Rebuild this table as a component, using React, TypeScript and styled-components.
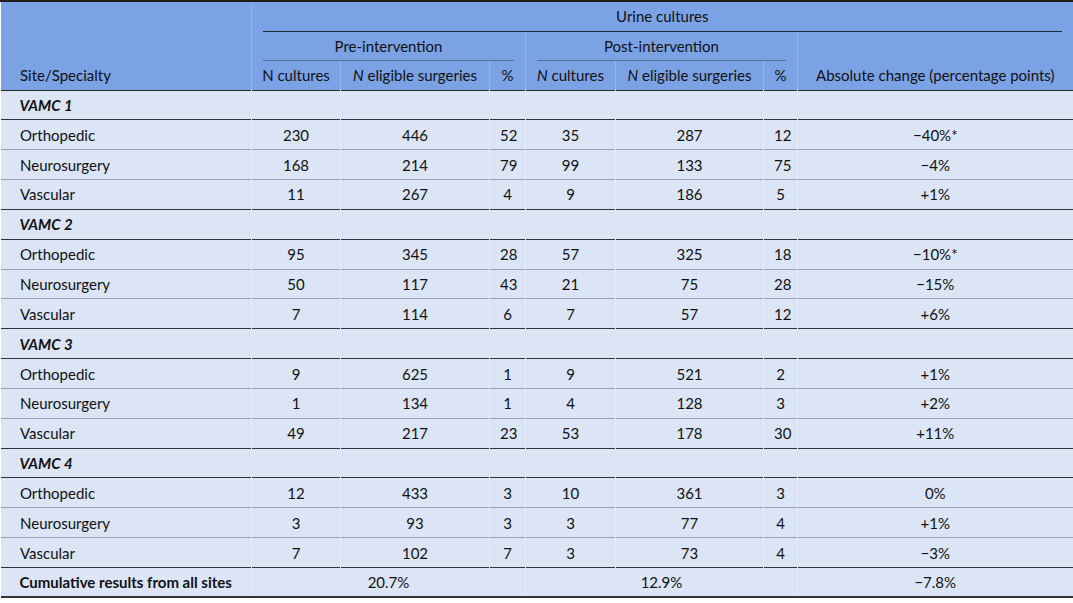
import React from 'react'
import styled, { createGlobalStyle } from 'styled-components'

const GlobalStyle = createGlobalStyle`
  body {
    margin: 0;
    background: #fff;
  }
`

interface Row {
  name: string
  values: string[]
  change: string
}

interface Group {
  site: string
  rows: Row[]
}

const groups: Group[] = [
  {
    site: 'VAMC 1',
    rows: [
      { name: 'Orthopedic', values: ['230', '446', '52', '35', '287', '12'], change: '−40%*' },
      { name: 'Neurosurgery', values: ['168', '214', '79', '99', '133', '75'], change: '−4%' },
      { name: 'Vascular', values: ['11', '267', '4', '9', '186', '5'], change: '+1%' }
    ]
  },
  {
    site: 'VAMC 2',
    rows: [
      { name: 'Orthopedic', values: ['95', '345', '28', '57', '325', '18'], change: '−10%*' },
      { name: 'Neurosurgery', values: ['50', '117', '43', '21', '75', '28'], change: '−15%' },
      { name: 'Vascular', values: ['7', '114', '6', '7', '57', '12'], change: '+6%' }
    ]
  },
  {
    site: 'VAMC 3',
    rows: [
      { name: 'Orthopedic', values: ['9', '625', '1', '9', '521', '2'], change: '+1%' },
      { name: 'Neurosurgery', values: ['1', '134', '1', '4', '128', '3'], change: '+2%' },
      { name: 'Vascular', values: ['49', '217', '23', '53', '178', '30'], change: '+11%' }
    ]
  },
  {
    site: 'VAMC 4',
    rows: [
      { name: 'Orthopedic', values: ['12', '433', '3', '10', '361', '3'], change: '0%' },
      { name: 'Neurosurgery', values: ['3', '93', '3', '3', '77', '4'], change: '+1%' },
      { name: 'Vascular', values: ['7', '102', '7', '3', '73', '4'], change: '−3%' }
    ]
  }
]

const Table = styled.table`
  width: 1072px;
  border-collapse: collapse;
  table-layout: fixed;
  font-family: Lato, 'Liberation Sans', sans-serif;
  font-size: 15px;
  color: #111;
  border-top: 2px solid #1c1c1c;
  border-bottom: 2px solid #333;
`

const HeadRow = styled.tr<{ $h?: number }>`
  background: #7ba2e5;
  height: ${(p) => p.$h || 30}px;
`

const HeadCell = styled.th<{ $align?: 'left' | 'center'; $first?: boolean }>`
  font-weight: 400;
  text-align: ${(p) => p.$align || 'center'};
  vertical-align: bottom;
  padding: 0 10px 6px ${(p) => (p.$first ? '19px' : '10px')};
  border-left: 1px solid rgba(255, 255, 255, 0.18);
  white-space: nowrap;
`

const SpanCell = styled.th`
  font-weight: 400;
  padding: 0 11px;
  vertical-align: bottom;
  border-left: 1px solid rgba(255, 255, 255, 0.18);
`

const SpanLabel = styled.div`
  height: 29px;
  line-height: 29px;
  border-bottom: 1px solid #1e2a3a;
  text-align: center;
`

const SubSpanLabel = styled(SpanLabel)`
  height: 28px;
  line-height: 28px;
  border-bottom-color: #5a6f94;
`

const HeaderEnd = styled(HeadRow)`
  border-bottom: 1px solid #2a2a2a;
`

const BodyRow = styled.tr<{ $strong?: boolean }>`
  background: #dbe5f6;
  height: 29.85px;
  border-bottom: 1px solid ${(p) => (p.$strong ? '#2f3338' : '#9ba2ad')};
`

const Cell = styled.td<{ $first?: boolean }>`
  text-align: ${(p) => (p.$first ? 'left' : 'center')};
  padding: 0 10px 0 ${(p) => (p.$first ? '19px' : '10px')};
  border-left: 1px solid rgba(255, 255, 255, 0.3);
  white-space: nowrap;
`

const SiteCell = styled.td`
  padding: 0 19px;
  font-style: italic;
  font-weight: 700;
`

const TotalLabel = styled.td`
  padding: 0 19px;
  font-weight: 700;
`

const Ital = styled.i`
  font-style: italic;
`

const widths = [251, 89, 149, 36, 90, 148, 34, 275]

const App: React.FC = () => (
  <>
    <GlobalStyle />
    <Table>
      <colgroup>
        {widths.map((w, i) => (
          <col key={i} style={{ width: w }} />
        ))}
      </colgroup>
      <thead>
        <HeadRow>
          <HeadCell rowSpan={3} $align="left" $first>
            Site/Specialty
          </HeadCell>
          <SpanCell colSpan={7}>
            <SpanLabel>Urine cultures</SpanLabel>
          </SpanCell>
        </HeadRow>
        <HeadRow $h={29}>
          <SpanCell colSpan={3}>
            <SubSpanLabel>Pre-intervention</SubSpanLabel>
          </SpanCell>
          <SpanCell colSpan={3}>
            <SubSpanLabel>Post-intervention</SubSpanLabel>
          </SpanCell>
          <HeadCell />
        </HeadRow>
        <HeaderEnd $h={29}>
          <HeadCell>N cultures</HeadCell>
          <HeadCell>
            <Ital>N</Ital> eligible surgeries
          </HeadCell>
          <HeadCell>%</HeadCell>
          <HeadCell>
            <Ital>N</Ital> cultures
          </HeadCell>
          <HeadCell>
            <Ital>N</Ital> eligible surgeries
          </HeadCell>
          <HeadCell>%</HeadCell>
          <HeadCell>Absolute change (percentage points)</HeadCell>
        </HeaderEnd>
      </thead>
      <tbody>
        {groups.map((g) => (
          <React.Fragment key={g.site}>
            <BodyRow $strong>
              <SiteCell colSpan={8}>{g.site}</SiteCell>
            </BodyRow>
            {g.rows.map((r, i) => (
              <BodyRow key={r.name} $strong={i === g.rows.length - 1}>
                <Cell $first>{r.name}</Cell>
                {r.values.map((v, j) => (
                  <Cell key={j}>{v}</Cell>
                ))}
                <Cell>{r.change}</Cell>
              </BodyRow>
            ))}
          </React.Fragment>
        ))}
        <BodyRow>
          <TotalLabel>Cumulative results from all sites</TotalLabel>
          <Cell colSpan={3}>20.7%</Cell>
          <Cell colSpan={3}>12.9%</Cell>
          <Cell>−7.8%</Cell>
        </BodyRow>
      </tbody>
    </Table>
  </>
)

export default App
